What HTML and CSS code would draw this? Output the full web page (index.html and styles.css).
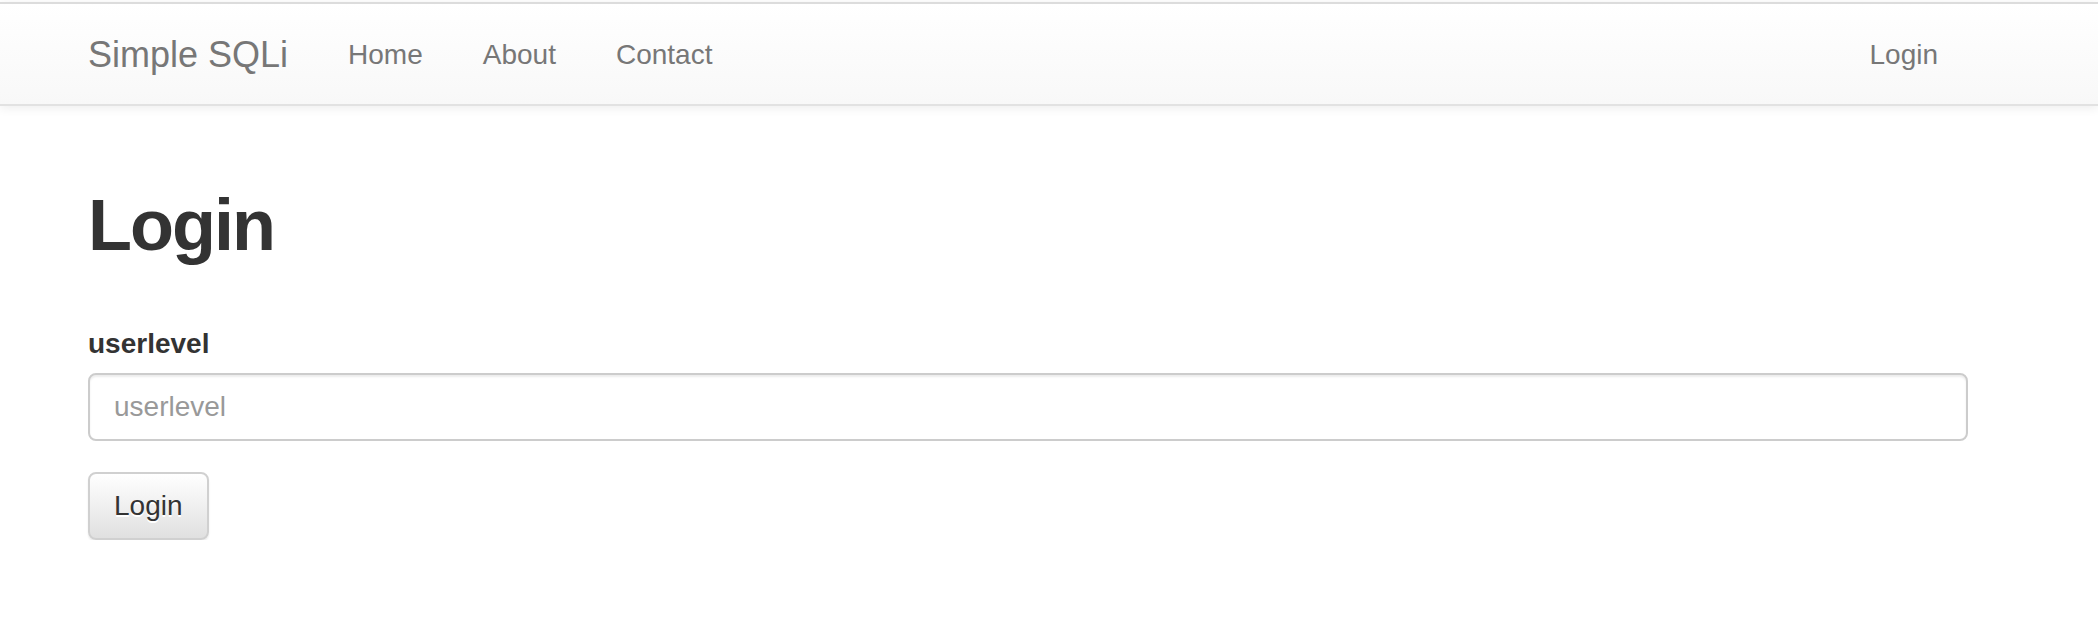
FILE: index.html
```html
<!DOCTYPE html>
<html lang="en">
<head>
<meta charset="utf-8">
<title>Simple SQLi</title>
<link rel="stylesheet" href="styles.css">
</head>
<body>
<nav class="navbar">
  <div class="container nav-inner">
    <a class="brand" href="#">Simple SQLi</a>
    <ul class="nav">
      <li><a href="#">Home</a></li>
      <li><a href="#">About</a></li>
      <li><a href="#">Contact</a></li>
    </ul>
    <ul class="nav nav-right">
      <li><a href="#">Login</a></li>
    </ul>
  </div>
</nav>
<main class="container">
  <h1 class="title">Login</h1>
  <form class="form">
    <div class="form-group">
      <label class="label" for="userlevel">userlevel</label>
      <input class="input" id="userlevel" type="text" placeholder="userlevel">
    </div>
    <button class="btn" type="button">Login</button>
  </form>
</main>
</body>
</html>
```
FILE: styles.css
```css
* { box-sizing: border-box; }
html, body { margin: 0; padding: 0; background: #fff; }
body {
  font-family: "Liberation Sans", Arial, Helvetica, sans-serif;
  font-size: 28px;
  line-height: 40px;
  color: #333;
}
.container {
  width: 1940px;
  margin-left: 58px;
  padding: 0 30px;
}
.navbar {
  margin-top: 2px;
  height: 104px;
  border-top: 2px solid #dcdcdc;
  border-bottom: 2px solid #e2e2e2;
  background: linear-gradient(to bottom, #ffffff 0%, #f8f8f8 100%);
  box-shadow: 0 2px 10px rgba(0,0,0,0.075);
}
.nav-inner {
  display: flex;
  align-items: stretch;
  height: 100px;
}
.brand {
  display: block;
  padding: 31px 30px 29px 0;
  font-size: 36px;
  line-height: 40px;
  color: #777;
  text-decoration: none;
}
.nav {
  display: flex;
  list-style: none;
  margin: 0;
  padding: 0;
}
.nav a {
  display: block;
  padding: 31px 30px 29px;
  line-height: 40px;
  font-size: 28px;
  color: #777;
  text-decoration: none;
}
.nav-right { margin-left: auto; }
.title {
  margin: 80px 0 59px;
  font-size: 72px;
  line-height: 79px;
  font-weight: bold;
  letter-spacing: -2px;
  color: #333;
}
.form { margin: 0; }
.form-group { margin-bottom: 31px; }
.label {
  display: block;
  margin-bottom: 9px;
  font-weight: bold;
  font-size: 28px;
  line-height: 40px;
}
.input {
  display: block;
  width: 100%;
  height: 68px;
  padding: 12px 24px;
  font-family: inherit;
  font-size: 28px;
  line-height: 40px;
  color: #555;
  background: #fff;
  border: 2px solid #ccc;
  border-radius: 8px;
  box-shadow: inset 0 2px 2px rgba(0,0,0,0.075);
}
.input::placeholder { color: #999; }
.btn {
  display: inline-block;
  height: 68px;
  padding: 12px 24px;
  font-family: inherit;
  font-size: 28px;
  line-height: 40px;
  color: #333;
  background: linear-gradient(to bottom, #ffffff 0%, #e0e0e0 100%);
  border: 2px solid #d0d0d0;
  border-radius: 8px;
  text-shadow: 0 2px 0 #fff;
  box-shadow: inset 0 2px 0 rgba(255,255,255,0.15), 0 2px 2px rgba(0,0,0,0.075);
  cursor: pointer;
}
```
